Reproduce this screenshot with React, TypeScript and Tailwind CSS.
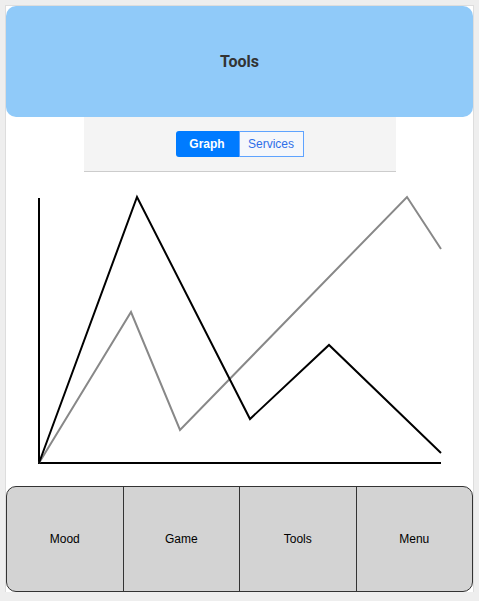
import React from "react";

export default function App() {
  const items = ["Mood", "Game", "Tools", "Menu"];
  return (
    <div className="min-h-[601px] w-[479px] bg-[#eeeeee] pt-[5px] px-[5px]">
      <div className="w-[469px] border border-[#dddddd] border-b-0 bg-white">
        <div className="h-[111px] rounded-[10px] bg-[#90caf9] flex items-center justify-center">
          <span className="text-[16px] font-bold text-[#333333]" style={{ fontFamily: "Roboto, sans-serif" }}>Tools</span>
        </div>
        <div className="mx-auto w-[312px] h-[55px] bg-[#f4f4f4] border-b border-[#cccccc] flex items-center justify-center" style={{ fontFamily: "'Liberation Sans', Arial, sans-serif" }}>
          <div className="flex h-[26px] text-[12px]">
            <div className="w-[63px] flex items-center justify-center bg-[#007bff] text-white font-bold rounded-l-[3px]">Graph</div>
            <div className="w-[65px] flex items-center justify-center bg-[#f5f7fb] text-[#2f6fe8] border border-solid border-[#5ea3ff]">Services</div>
          </div>
        </div>
        <svg width="467" height="314" viewBox="0 0 467 314" className="block">
          <line x1="33" y1="26" x2="33" y2="292" stroke="#000" strokeWidth="2" />
          <line x1="32" y1="291" x2="435" y2="291" stroke="#000" strokeWidth="2" />
          <polyline points="33,291 125,140 174,258 401,25 435,77" fill="none" stroke="#888" strokeWidth="2" />
          <polyline points="33,291 131,25 244,247 323,173 435,281" fill="none" stroke="#000" strokeWidth="2" />
        </svg>
        <div className="flex h-[106px] rounded-[10px] border border-[#333333] bg-[#d3d3d3] overflow-hidden" style={{ fontFamily: "'Liberation Sans', Arial, sans-serif" }}>
          {items.map((t, i) => (
            <div key={t} className={`flex-1 flex items-center justify-center text-[12px] text-black ${i > 0 ? "border-l border-[#333333]" : ""}`}>{t}</div>
          ))}
        </div>
      </div>
    </div>
  );
}
